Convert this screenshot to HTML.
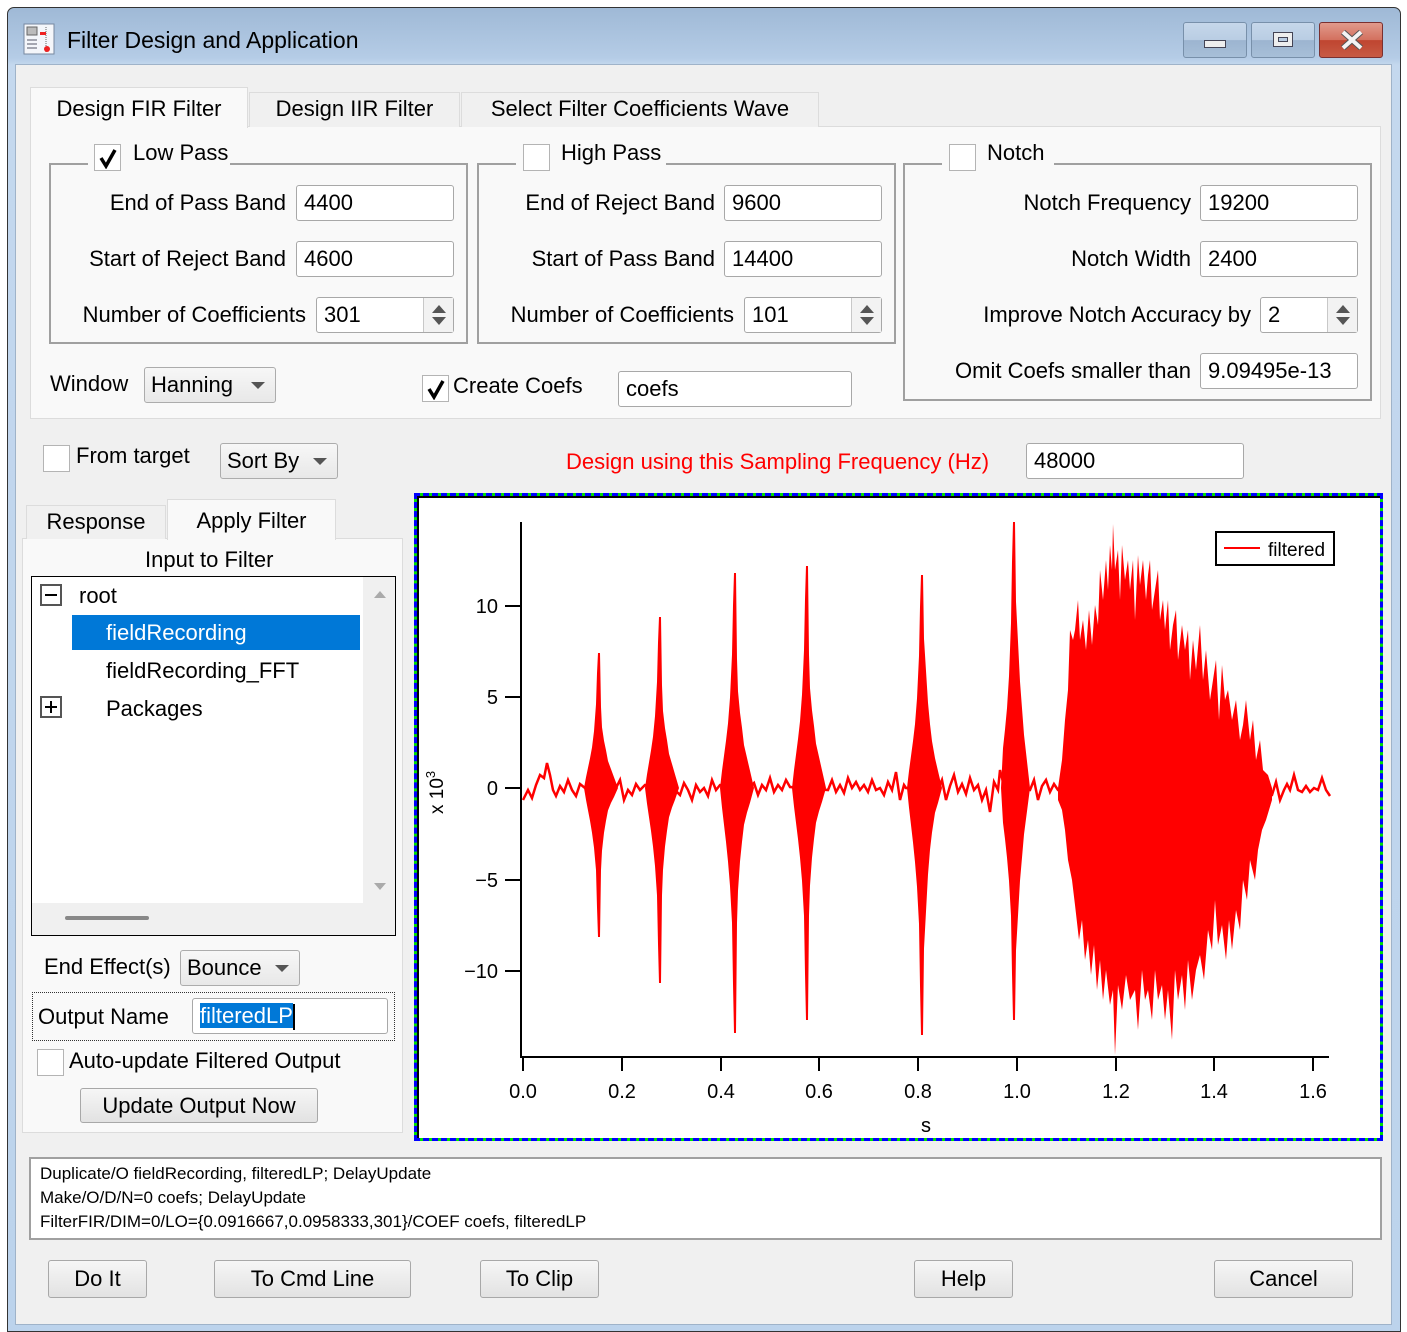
<!DOCTYPE html>
<html><head><meta charset="utf-8"><style>
*{box-sizing:border-box;margin:0;padding:0}
body{width:1407px;height:1332px;position:relative;background:#fff;font-family:"Liberation Sans",sans-serif;font-size:22px;color:#000;overflow:hidden}
.a{position:absolute}
.lab{position:absolute;left:0;text-align:right;white-space:nowrap;line-height:36px;height:36px}
.tx{position:absolute;white-space:nowrap}
.fld{position:absolute;background:#fff;border:1px solid #a8a8a8;border-radius:3px;height:36px;line-height:34px;padding-left:7px;white-space:nowrap}
.spin{position:absolute;top:0;right:0;width:30px;height:34px;border-left:1px solid #c8c8c8;background:#f2f2f2}
.spin:before{content:"";position:absolute;left:8px;top:7px;border:7px solid transparent;border-top:0;border-bottom:8px solid #555}
.spin:after{content:"";position:absolute;left:8px;top:19px;border:7px solid transparent;border-bottom:0;border-top:8px solid #555}
.dd{position:absolute;background:linear-gradient(#f7f7f7,#e8e8e8);border:1px solid #acacac;border-radius:3px;height:36px;line-height:34px;padding-left:6px;white-space:nowrap}
.dd:after{content:"";position:absolute;right:10px;top:14px;border:7px solid transparent;border-bottom:0;border-top:7px solid #555}
.cb{position:absolute;width:27px;height:27px;background:#fff;border:1px solid #b4b4b4}
.btn{position:absolute;background:linear-gradient(#f6f6f6,#e2e2e2);border:1px solid #a8a8a8;border-radius:3px;height:38px;line-height:36px;text-align:center}
.grp{position:absolute;border:2px solid #a0a0a0;border-top-color:#a0a0a0}
.tab{position:absolute;background:#f0f0f0;border:1px solid #dcdcdc;border-bottom:none;text-align:center}
</style></head><body>
<!-- window frame -->
<div class="a" style="left:7px;top:7px;width:1394px;height:1325px;border:1px solid #333;border-radius:7px 7px 0 0;background:linear-gradient(#9fb9d6 0,#b5cce6 50px,#c4d8ee 57px,#bcd3ec 100%)"></div>
<div class="a" style="left:15px;top:64px;width:1377px;height:1261px;background:#f0f0f0;border:1px solid #9fb3c9"></div>
<!-- title -->
<svg class="a" style="left:22px;top:22px" width="34" height="34" viewBox="0 0 34 34"><rect x="2" y="2" width="30" height="30" fill="#f4f6fa" stroke="#7788a0"/><rect x="5" y="5" width="10" height="8" fill="#bbb" stroke="#666"/><line x1="5" y1="18" x2="15" y2="18" stroke="#556"/><line x1="5" y1="22" x2="15" y2="22" stroke="#556"/><line x1="5" y1="26" x2="15" y2="26" stroke="#556"/><line x1="24" y1="5" x2="24" y2="30" stroke="#666" stroke-dasharray="1 1"/><rect x="18" y="10" width="6" height="3" fill="#e22"/><circle cx="25" cy="27" r="3" fill="#e22"/></svg>
<div class="tx" style="left:67px;top:27px;font-size:23px">Filter Design and Application</div>
<div class="a" style="left:1183px;top:22px;width:64px;height:36px;border:1px solid #7890aa;border-radius:3px;background:linear-gradient(#c6d7ea 0,#b9cde3 50%,#9cb4d0 51%,#a7bfd8)"><div class="a" style="left:20px;top:17px;width:22px;height:8px;background:#eee;border:1px solid #445"></div></div>
<div class="a" style="left:1251px;top:22px;width:64px;height:36px;border:1px solid #7890aa;border-radius:3px;background:linear-gradient(#c6d7ea 0,#b9cde3 50%,#9cb4d0 51%,#a7bfd8)"><div class="a" style="left:21px;top:9px;width:20px;height:15px;background:#eee;border:1px solid #445"><div class="a" style="left:4px;top:4px;width:10px;height:5px;border:1px solid #445;background:#b9cde3"></div></div></div>
<div class="a" style="left:1319px;top:22px;width:64px;height:36px;border:1px solid #7a3030;border-radius:3px;background:linear-gradient(#e19a8c 0,#d3705e 50%,#bf4530 51%,#c75a44)"><svg class="a" style="left:20px;top:7px" width="24" height="20"><path d="M3 2L12 10L21 2M3 18L12 10L21 18" stroke="#555" stroke-width="6" fill="none"/><path d="M3 2L12 10L21 2M3 18L12 10L21 18" stroke="#f4f4f4" stroke-width="4" fill="none"/></svg></div>

<!-- top tab panel -->
<div class="a" style="left:30px;top:126px;width:1351px;height:293px;background:#f9f9f9;border:1px solid #dcdcdc"></div>
<div class="tab" style="left:249px;top:92px;width:211px;height:35px;line-height:32px">Design IIR Filter</div>
<div class="tab" style="left:461px;top:92px;width:358px;height:35px;line-height:32px">Select Filter Coefficients Wave</div>
<div class="tab" style="left:30px;top:87px;width:218px;height:41px;line-height:42px;background:#f9f9f9">Design FIR Filter</div>

<!-- groups -->
<div class="grp" style="left:49px;top:163px;width:419px;height:181px"></div>
<div class="a" style="left:88px;top:150px;width:142px;height:20px;background:#f9f9f9"></div>
<div class="cb" style="left:94px;top:144px"></div>
<svg class="a" style="left:97px;top:147px" width="22" height="22"><path d="M4 11 L9 19 L18 3" stroke="#000" stroke-width="3.5" fill="none"/></svg>
<div class="tx" style="left:133px;top:140px">Low Pass</div>

<div class="grp" style="left:477px;top:163px;width:419px;height:181px"></div>
<div class="a" style="left:516px;top:150px;width:150px;height:20px;background:#f9f9f9"></div>
<div class="cb" style="left:523px;top:144px"></div>
<div class="tx" style="left:561px;top:140px">High Pass</div>

<div class="grp" style="left:903px;top:163px;width:469px;height:238px"></div>
<div class="a" style="left:942px;top:150px;width:112px;height:20px;background:#f9f9f9"></div>
<div class="cb" style="left:949px;top:144px"></div>
<div class="tx" style="left:987px;top:140px">Notch</div>

<div class="lab" style="width:286px;top:185px">End of Pass Band</div><div class="fld" style="left:296px;top:185px;width:158px">4400</div>
<div class="lab" style="width:286px;top:241px">Start of Reject Band</div><div class="fld" style="left:296px;top:241px;width:158px">4600</div>
<div class="lab" style="width:306px;top:297px">Number of Coefficients</div><div class="fld" style="left:316px;top:297px;width:138px">301<div class="spin"></div></div>

<div class="lab" style="width:715px;top:185px">End of Reject Band</div><div class="fld" style="left:724px;top:185px;width:158px">9600</div>
<div class="lab" style="width:715px;top:241px">Start of Pass Band</div><div class="fld" style="left:724px;top:241px;width:158px">14400</div>
<div class="lab" style="width:734px;top:297px">Number of Coefficients</div><div class="fld" style="left:744px;top:297px;width:138px">101<div class="spin"></div></div>

<div class="lab" style="width:1191px;top:185px">Notch Frequency</div><div class="fld" style="left:1200px;top:185px;width:158px">19200</div>
<div class="lab" style="width:1191px;top:241px">Notch Width</div><div class="fld" style="left:1200px;top:241px;width:158px">2400</div>
<div class="lab" style="width:1251px;top:297px">Improve Notch Accuracy by</div><div class="fld" style="left:1260px;top:297px;width:98px">2<div class="spin"></div></div>
<div class="lab" style="width:1191px;top:353px">Omit Coefs smaller than</div><div class="fld" style="left:1200px;top:353px;width:158px">9.09495e-13</div>

<div class="tx" style="left:50px;top:371px">Window</div>
<div class="dd" style="left:144px;top:367px;width:132px">Hanning</div>
<div class="cb" style="left:422px;top:375px"></div>
<svg class="a" style="left:425px;top:378px" width="22" height="22"><path d="M4 11 L9 19 L18 3" stroke="#000" stroke-width="3.5" fill="none"/></svg>
<div class="tx" style="left:453px;top:373px">Create Coefs</div>
<div class="fld" style="left:618px;top:371px;width:234px">coefs</div>

<!-- middle row -->
<div class="cb" style="left:43px;top:445px"></div>
<div class="tx" style="left:76px;top:443px">From target</div>
<div class="dd" style="left:220px;top:443px;width:118px">Sort By</div>
<div class="tx" style="left:566px;top:449px;color:#f00">Design using this Sampling Frequency (Hz)</div>
<div class="fld" style="left:1026px;top:443px;width:218px">48000</div>

<!-- left tabs -->
<div class="a" style="left:22px;top:538px;width:381px;height:595px;background:#f9f9f9;border:1px solid #dcdcdc"></div>
<div class="tab" style="left:26px;top:505px;width:140px;height:34px;line-height:32px">Response</div>
<div class="tab" style="left:167px;top:499px;width:169px;height:41px;line-height:42px;background:#f9f9f9">Apply Filter</div>
<div class="tx" style="left:145px;top:547px">Input to Filter</div>
<div class="a" style="left:31px;top:576px;width:365px;height:360px;border:1px solid #000;background:#f0f0f0"></div>
<div class="a" style="left:32px;top:577px;width:331px;height:326px;background:#fff"></div>
<div class="a" style="left:374px;top:591px;border:6px solid transparent;border-top:0;border-bottom:7px solid #aaa"></div>
<div class="a" style="left:374px;top:883px;border:6px solid transparent;border-bottom:0;border-top:7px solid #aaa"></div>
<div class="a" style="left:65px;top:916px;width:84px;height:4px;background:#888;border-radius:2px"></div>
<div class="a" style="left:40px;top:584px;width:22px;height:22px;border:2px solid #555"><div class="a" style="left:3px;top:8px;width:12px;height:2px;background:#000"></div></div>
<div class="tx" style="left:79px;top:583px">root</div>
<div class="a" style="left:72px;top:615px;width:288px;height:35px;background:#0078d7"></div>
<div class="tx" style="left:106px;top:620px;color:#fff">fieldRecording</div>
<div class="tx" style="left:106px;top:658px">fieldRecording_FFT</div>
<div class="a" style="left:40px;top:696px;width:22px;height:22px;border:2px solid #555"><div class="a" style="left:3px;top:8px;width:12px;height:2px;background:#000"></div><div class="a" style="left:8px;top:3px;width:2px;height:12px;background:#000"></div></div>
<div class="tx" style="left:106px;top:696px">Packages</div>

<div class="tx" style="left:44px;top:954px">End Effect(s)</div>
<div class="dd" style="left:180px;top:950px;width:120px">Bounce</div>
<div class="a" style="left:32px;top:992px;width:363px;height:49px;border:1px dotted #333"></div>
<div class="tx" style="left:38px;top:1004px">Output Name</div>
<div class="fld" style="left:192px;top:998px;width:196px"><span style="background:#0078d7;color:#fff">filteredLP</span><span style="display:inline-block;width:2px;height:26px;background:#000;vertical-align:middle"></span></div>
<div class="cb" style="left:37px;top:1049px"></div>
<div class="tx" style="left:69px;top:1048px">Auto-update Filtered Output</div>
<div class="btn" style="left:80px;top:1088px;width:238px;height:35px;line-height:33px">Update Output Now</div>

<!-- plot -->
<div class="a" style="left:414px;top:493px;width:969px;height:648px;border:3px dashed #0000ff;background:#00e000"></div>
<div class="a" style="left:417px;top:496px;width:963px;height:642px;background:#fff;border-top:2px solid #000;border-left:2px solid #000"></div>
<svg class="a" style="left:0;top:0" width="1407" height="1332">
<g fill="#f00">
<g transform="translate(598,788) scale(1,135)"><path d="M-14,0 L-12,-.08 L-10,-.15 L-8,-.22 L-6,-.3 L-4,-.42 L-2,-.62 L-1,-.85 L0,-1 L2,-1 L3,-.6 L4,-.45 L6,-.35 L8,-.28 L10,-.2 L13,-.14 L16,-.08 L20,0Z"/></g>
<g transform="translate(598,788) scale(1,149)"><path d="M-14,0 L-12,.08 L-10,.15 L-8,.22 L-6,.3 L-4,.4 L-2,.55 L-1,.8 L0,1 L2,1 L3,.55 L4,.42 L6,.3 L8,.22 L10,.15 L13,.1 L16,.06 L20,0Z"/></g>
<g transform="translate(659,788) scale(1,171)"><path d="M-14,0 L-12,-.08 L-10,-.15 L-8,-.22 L-6,-.3 L-4,-.42 L-2,-.62 L-1,-.85 L0,-1 L2,-1 L3,-.6 L4,-.45 L6,-.35 L8,-.28 L10,-.2 L13,-.14 L16,-.08 L20,0Z"/></g>
<g transform="translate(659,788) scale(1,195)"><path d="M-14,0 L-12,.08 L-10,.15 L-8,.22 L-6,.3 L-4,.4 L-2,.55 L-1,.8 L0,1 L2,1 L3,.55 L4,.42 L6,.3 L8,.22 L10,.15 L13,.1 L16,.06 L20,0Z"/></g>
<g transform="translate(734,788) scale(1,215)"><path d="M-14,0 L-12,-.08 L-10,-.15 L-8,-.22 L-6,-.3 L-4,-.42 L-2,-.62 L-1,-.85 L0,-1 L2,-1 L3,-.6 L4,-.45 L6,-.35 L8,-.28 L10,-.2 L13,-.14 L16,-.08 L20,0Z"/></g>
<g transform="translate(734,788) scale(1,245)"><path d="M-14,0 L-12,.08 L-10,.15 L-8,.22 L-6,.3 L-4,.4 L-2,.55 L-1,.8 L0,1 L2,1 L3,.55 L4,.42 L6,.3 L8,.22 L10,.15 L13,.1 L16,.06 L20,0Z"/></g>
<g transform="translate(806,788) scale(1,222)"><path d="M-14,0 L-12,-.08 L-10,-.15 L-8,-.22 L-6,-.3 L-4,-.42 L-2,-.62 L-1,-.85 L0,-1 L2,-1 L3,-.6 L4,-.45 L6,-.35 L8,-.28 L10,-.2 L13,-.14 L16,-.08 L20,0Z"/></g>
<g transform="translate(806,788) scale(1,232)"><path d="M-14,0 L-12,.08 L-10,.15 L-8,.22 L-6,.3 L-4,.4 L-2,.55 L-1,.8 L0,1 L2,1 L3,.55 L4,.42 L6,.3 L8,.22 L10,.15 L13,.1 L16,.06 L20,0Z"/></g>
<g transform="translate(921,788) scale(1,213)"><path d="M-14,0 L-12,-.08 L-10,-.15 L-8,-.22 L-6,-.3 L-4,-.42 L-2,-.62 L-1,-.85 L0,-1 L2,-1 L3,-.7 L5,-.55 L7,-.4 L9,-.3 L11,-.22 L14,-.14 L17,-.08 L21,0Z"/></g>
<g transform="translate(921,788) scale(1,247)"><path d="M-14,0 L-12,.08 L-10,.15 L-8,.22 L-6,.3 L-4,.4 L-2,.55 L-1,.8 L0,1 L2,1 L3,.65 L5,.5 L7,.35 L9,.25 L11,.18 L14,.1 L17,.06 L21,0Z"/></g>
<g transform="translate(1013,788) scale(1,266)"><path d="M-12,0 L-10,-.15 L-8,-.22 L-6,-.3 L-4,-.42 L-2,-.62 L-1,-.85 L0,-1 L2,-1 L3,-.7 L5,-.55 L7,-.4 L9,-.3 L11,-.2 L14,-.1 L17,0Z"/></g>
<g transform="translate(1013,788) scale(1,232)"><path d="M-12,0 L-10,.15 L-8,.22 L-6,.3 L-4,.4 L-2,.55 L-1,.8 L0,1 L2,1 L3,.7 L5,.55 L7,.4 L9,.3 L11,.2 L14,.1 L17,0Z"/></g>
<path d="M1058,788 L1062,760 L1065,720 L1068,690 L1070,630 L1073,640 L1075,630 L1078,600 L1080,640 L1083,620 L1086,650 L1089,610 L1092,645 L1095,605 L1098,625 L1100,570 L1103,600 L1106,560 L1108,590 L1110,545 L1112,570 L1113,524 L1115,570 L1118,550 L1120,600 L1122,545 L1125,580 L1128,560 L1130,590 L1133,560 L1135,620 L1138,555 L1140,585 L1143,560 L1146,600 L1148,575 L1150,560 L1152,610 L1155,590 L1158,570 L1160,620 L1163,600 L1165,630 L1168,600 L1170,650 L1173,625 L1176,610 L1178,660 L1182,625 L1185,650 L1188,630 L1190,680 L1193,640 L1196,670 L1200,625 L1203,680 L1206,650 L1210,700 L1213,680 L1216,660 L1219,720 L1222,665 L1225,700 L1228,690 L1232,720 L1236,700 L1240,740 L1243,725 L1246,700 L1250,740 L1253,720 L1256,760 L1260,740 L1263,770 L1268,775 L1272,788 L1272,800 L1266,820 L1262,830 L1258,850 L1255,880 L1250,860 L1247,900 L1243,880 L1240,930 L1236,910 L1232,950 L1229,920 L1226,960 L1222,925 L1218,945 L1215,900 L1212,950 L1208,930 L1204,980 L1200,955 L1196,970 L1192,1000 L1188,960 L1185,1010 L1182,975 L1178,1000 L1175,970 L1172,1040 L1168,990 L1165,1020 L1162,985 L1158,1000 L1155,970 L1152,1020 L1148,990 L1145,1000 L1142,970 L1138,1030 L1135,990 L1130,1000 L1126,975 L1122,1010 L1118,985 L1115,1055 L1113,990 L1110,1005 L1106,970 L1103,1000 L1100,960 L1097,990 L1094,945 L1091,975 L1088,940 L1085,960 L1082,920 L1079,940 L1075,905 L1072,880 L1068,860 L1065,830 L1062,810 L1058,800Z"/>
</g>
<polyline fill="none" stroke="#f00" stroke-width="2.5" points="523,800 528,790 532,798 536,785 540,775 544,778 547,763 550,775 553,790 556,796 560,786 564,792 568,780 572,790 576,796 580,784 585,788 615,790 620,780 624,800 628,790 632,795 636,784 640,790 645,785 675,790 680,795 684,783 688,790 692,800 696,785 700,792 704,788 708,796 712,780 716,790 720,785 750,787 754,783 758,795 762,785 766,790 770,778 774,792 778,785 782,790 786,780 790,787 828,790 832,780 836,792 840,785 844,793 848,778 852,788 856,782 860,790 864,785 868,792 872,780 876,790 880,788 884,795 888,782 892,790 896,772 900,800 904,785 906,788 938,790 942,780 946,800 950,786 954,775 958,792 962,784 966,794 970,778 974,790 978,785 982,800 986,790 990,812 994,782 998,790 1000,770 1004,786 1030,790 1034,780 1038,800 1042,786 1046,780 1050,792 1054,784 1058,790 1272,795 1276,782 1280,800 1284,790 1287,784 1290,790 1294,775 1298,790 1302,792 1306,786 1310,792 1314,788 1318,790 1322,778 1326,790 1330,796"/>
<g stroke="#000" stroke-width="2" fill="none">
<line x1="521" y1="522" x2="521" y2="1058"/><line x1="520" y1="1057" x2="1329" y2="1057"/>
<line x1="505" y1="606" x2="521" y2="606"/><line x1="505" y1="697" x2="521" y2="697"/><line x1="505" y1="788" x2="521" y2="788"/><line x1="505" y1="880" x2="521" y2="880"/><line x1="505" y1="971" x2="521" y2="971"/>
<line x1="523" y1="1057" x2="523" y2="1071"/><line x1="622" y1="1057" x2="622" y2="1071"/><line x1="721" y1="1057" x2="721" y2="1071"/><line x1="819" y1="1057" x2="819" y2="1071"/><line x1="918" y1="1057" x2="918" y2="1071"/><line x1="1017" y1="1057" x2="1017" y2="1071"/><line x1="1116" y1="1057" x2="1116" y2="1071"/><line x1="1214" y1="1057" x2="1214" y2="1071"/><line x1="1313" y1="1057" x2="1313" y2="1071"/>
<rect x="1216" y="532" width="118" height="33" fill="#fff"/>
</g>
<line x1="1224" y1="548" x2="1260" y2="548" stroke="#f00" stroke-width="2"/>
<g font-family="Liberation Sans,sans-serif" font-size="20" fill="#000">
<text x="1268" y="556" font-size="19">filtered</text>
<g text-anchor="end"><text x="498" y="613">10</text><text x="498" y="704">5</text><text x="498" y="795">0</text><text x="498" y="887">−5</text><text x="498" y="978">−10</text></g>
<g text-anchor="middle"><text x="523" y="1098">0.0</text><text x="622" y="1098">0.2</text><text x="721" y="1098">0.4</text><text x="819" y="1098">0.6</text><text x="918" y="1098">0.8</text><text x="1017" y="1098">1.0</text><text x="1116" y="1098">1.2</text><text x="1214" y="1098">1.4</text><text x="1313" y="1098">1.6</text><text x="926" y="1132">s</text></g>
<text transform="translate(443,814) rotate(-90)" font-size="19">x 10<tspan dy="-8" font-size="13">3</tspan></text>
</g>
</svg>

<!-- log -->
<div class="a" style="left:29px;top:1157px;width:1353px;height:83px;background:#fff;border:2px solid #a0a0a0;padding:3px 0 0 9px;font-size:17px;line-height:24px">Duplicate/O fieldRecording, filteredLP; DelayUpdate<br>Make/O/D/N=0 coefs; DelayUpdate<br>FilterFIR/DIM=0/LO={0.0916667,0.0958333,301}/COEF coefs, filteredLP</div>
<div class="btn" style="left:48px;top:1260px;width:99px">Do It</div>
<div class="btn" style="left:214px;top:1260px;width:197px">To Cmd Line</div>
<div class="btn" style="left:480px;top:1260px;width:119px">To Clip</div>
<div class="btn" style="left:914px;top:1260px;width:99px">Help</div>
<div class="btn" style="left:1214px;top:1260px;width:139px">Cancel</div>
</body></html>
